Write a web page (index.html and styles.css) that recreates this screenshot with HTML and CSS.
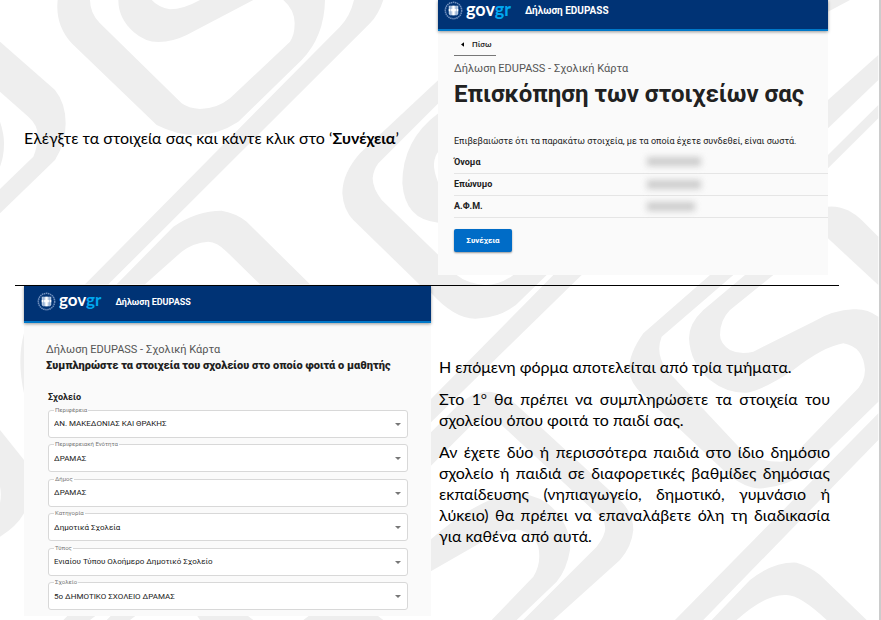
FILE: index.html
```html
<!DOCTYPE html>
<html lang="el">
    <head>
        <meta charset="UTF-8">
        <meta name="viewport" content="width=device-width, initial-scale=1.0">
        <title>Δήλωση EDUPASS - Οδηγίες</title>
        <link rel="stylesheet" href="styles.css">
    </head>

    <body>
        <!-- Watermark -->
        <svg class="watermark" viewBox="0 0 2643 1860" aria-hidden="true">
            <path d="M0,125 L165,270 Q197,310 197,370 Q197,430 165,480 L0,640 V567 L100,470 Q113,440 113,405 Q113,375 85,350 L0,275Z"/>
            <path d="M0,365 Q12,400 12,430 Q12,470 0,500Z"/>
            <path d="M173,0 Q165,75 215,130 L470,375 Q600,440 715,365 L905,180 Q973,110 975,0 H850 Q884,30 884,70 Q884,105 870,125 L690,295 Q650,327 600,327 Q565,325 545,310 L300,70 Q270,40 270,0Z"/>
            <path d="M355,0 Q355,55 400,95 Q435,126 475,126 Q520,125 560,105 L760,0 H600 Q550,28 510,28 Q475,22 455,0Z"/>
            <path d="M1062,0 Q1050,50 1020,80 L255,853 H325 L1110,70 Q1135,45 1150,0Z"/>
            <path d="M350,853 L520,680 Q590,632 665,632 Q710,640 740,665 L930,853 H780 L680,755 Q650,725 625,725 Q580,728 545,755 L435,853Z"/>
            <path d="M1315,240 L1080,460 Q1027,520 1027,580 Q1030,630 1060,660 L1260,855 H1315 V765 L1145,600 Q1118,565 1118,535 Q1120,510 1135,490 L1315,310Z"/>
            <path d="M1315,340 Q1207,420 1207,550 Q1215,660 1315,668 V550 Q1300,510 1302,490 Q1305,465 1315,455Z"/>
            <path d="M2130,825 L1930,1000 Q1887,1060 1887,1110 Q1890,1150 1930,1185 L2180,1420 Q2240,1470 2290,1465 Q2370,1455 2420,1415 L2635,1205 V950 Q2600,925 2560,928 Q2500,930 2440,965 L2260,1055 Q2220,1065 2190,1050 Q2160,1030 2160,1005 Q2160,960 2190,930 L2320,825 H2235 L2110,930 Q2067,970 2067,1015 Q2070,1090 2130,1140 Q2180,1180 2240,1178 Q2290,1170 2380,1110 Q2470,1040 2530,1030 Q2590,1040 2595,1110 Q2595,1150 2560,1180 L2410,1335 Q2370,1385 2340,1385 Q2280,1385 2230,1355 L2000,1110 Q1965,1060 1985,1010 L2200,825Z"/>
            <path d="M2635,1240 L2025,1860 H2110 L2635,1320Z"/>
            <path d="M2135,1860 L2250,1740 Q2320,1685 2390,1688 Q2430,1700 2460,1725 L2600,1860 H2480 Q2400,1785 2360,1785 Q2300,1780 2210,1860Z"/>
            <path d="M1290,1300 L1380,1210 Q1420,1175 1470,1175 Q1520,1185 1550,1215 L1860,1500 Q1900,1540 1900,1590 Q1895,1640 1860,1680 L1660,1860 H1570 L1790,1640 Q1820,1600 1815,1580 Q1815,1560 1790,1540 L1510,1280 Q1470,1240 1420,1270 L1290,1400Z"/>
            <path d="M1290,1620 Q1450,1480 1560,1480 Q1640,1490 1680,1550 Q1715,1600 1710,1650 Q1700,1710 1670,1745 L1550,1860 H1475 L1600,1730 Q1625,1690 1615,1640 Q1600,1600 1560,1590 Q1510,1585 1430,1635 L1290,1715Z"/>
            <path d="M1660,825 L1290,1200 V1270 L1745,825Z"/>
            <path d="M1290,875 Q1370,965 1440,955 Q1520,950 1570,893 L1640,825 H1540 Q1500,855 1455,855 Q1400,850 1370,825 H1290Z"/>
            <path d="M2484,35 L2550,0 H2484Z"/>
            <path d="M2484,300 L2635,165 V240 L2484,385Z"/>
            <path d="M2484,465 L2635,315 V355 L2484,505Z"/>
            <path d="M2484,620 Q2540,615 2590,665 L2635,710 V855 L2484,715Z"/>
            <path d="M72,1000 Q50,1080 72,1180Z"/>
            <path d="M0,1290 L72,1380 V1540 Q50,1580 0,1610 V1510 Q5,1480 0,1460Z"/>
            <path d="M205,1845 L190,1860 H270 L290,1845Z M335,1845 L320,1860 H390 L410,1845Z M590,1845 H740 L760,1860 H600Z M930,1845 H1130 L1150,1860 H910Z"/>
        </svg>

        <!-- Emblem used in both headers -->
        <svg class="symbols" aria-hidden="true">
            <symbol id="emblem" viewBox="0 0 20 20">
                <circle cx="10" cy="10" r="8.6" fill="none" stroke="#6f8fbd" stroke-width="1.6" stroke-dasharray="1.6 .6"/>
                <path d="M5 5h10v8q0 1.500-1.500 2h-7q-1.500-.5-1.500-2z" fill="#b9cce4"/>
                <path d="M10 5v10M5 9.500h10" stroke="#fff" stroke-width="2.400"/>
                <path d="M7 5v10M13 5v10" stroke="#7f9dc6" stroke-width=".6"/>
            </symbol>
        </svg>

        <main class="page">
            <section class="row row-review">
                <div class="note">
                    <p>Ελέγξτε τα στοιχεία σας και κάντε κλικ στο ‘<b>Συνέχεια</b>’</p>
                </div>
                <div class="card card-review">
                    <header class="header header-short">
                        <svg class="emblem"><use href="#emblem"/></svg>
                        <span class="brand">gov<span>gr</span></span>
                        <span class="service">Δήλωση EDUPASS</span>
                    </header>
                    <div class="review-body">
                        <a class="back" href="#"><svg class="back-icon" viewBox="0 0 4 6"><path d="M4 0v6L0 3z"/></svg>Πίσω</a>
                        <p class="caption">Δήλωση EDUPASS - Σχολική Κάρτα</p>
                        <h1>Επισκόπηση των στοιχείων σας</h1>
                        <p class="intro">Επιβεβαιώστε ότι τα παρακάτω στοιχεία, με τα οποία έχετε συνδεθεί, είναι σωστά.</p>
                        <table class="details">
                            <tr><th scope="row">Όνομα</th><td><span class="hidden-value"></span></td></tr>
                            <tr><th scope="row">Επώνυμο</th><td><span class="hidden-value"></span></td></tr>
                            <tr><th scope="row">Α.Φ.Μ.</th><td><span class="hidden-value short"></span></td></tr>
                        </table>
                        <button class="submit" type="button">Συνέχεια</button>
                    </div>
                </div>
            </section>

            <section class="row row-school">
                <div class="card card-school">
                    <header class="header">
                        <svg class="emblem"><use href="#emblem"/></svg>
                        <span class="brand">gov<span>gr</span></span>
                        <span class="service">Δήλωση EDUPASS</span>
                    </header>
                    <form class="school-form">
                        <p class="caption">Δήλωση EDUPASS - Σχολική Κάρτα</p>
                        <h2>Συμπληρώστε τα στοιχεία του σχολείου στο οποίο φοιτά ο μαθητής</h2>
                        <h3>Σχολείο</h3>
                        <div class="fields">
                            <div class="field">
                                <label for="region">Περιφέρεια</label>
                                <select id="region"><option>ΑΝ. ΜΑΚΕΔΟΝΙΑΣ ΚΑΙ ΘΡΑΚΗΣ</option></select>
                            </div>
                            <div class="field">
                                <label for="unit">Περιφερειακή Ενότητα</label>
                                <select id="unit"><option>ΔΡΑΜΑΣ</option></select>
                            </div>
                            <div class="field">
                                <label for="city">Δήμος</label>
                                <select id="city"><option>ΔΡΑΜΑΣ</option></select>
                            </div>
                            <div class="field">
                                <label for="category">Κατηγορία</label>
                                <select id="category"><option>Δημοτικά Σχολεία</option></select>
                            </div>
                            <div class="field">
                                <label for="type">Τύπος</label>
                                <select id="type"><option>Ενιαίου Τύπου Ολοήμερο Δημοτικό Σχολείο</option></select>
                            </div>
                            <div class="field">
                                <label for="school">Σχολείο</label>
                                <select id="school"><option>5ο ΔΗΜΟΤΙΚΟ ΣΧΟΛΕΙΟ ΔΡΑΜΑΣ</option></select>
                            </div>
                        </div>
                    </form>
                </div>
                <div class="note note-school">
                    <p>Η επόμενη φόρμα αποτελείται από τρία τμήματα.</p>
                    <p>Στο 1<sup>ο</sup> θα πρέπει να συμπληρώσετε τα στοιχεία του σχολείου όπου φοιτά το παιδί σας.</p>
                    <p>Αν έχετε δύο ή περισσότερα παιδιά στο ίδιο δημόσιο σχολείο ή παιδιά σε διαφορετικές βαθμίδες δημόσιας εκπαίδευσης (νηπιαγωγείο, δημοτικό, γυμνάσιο ή λύκειο) θα πρέπει να επαναλάβετε όλη τη διαδικασία για καθένα από αυτά.</p>
                </div>
            </section>
        </main>
    </body>
</html>
```
FILE: styles.css
```css
* {
    box-sizing: border-box;
    margin: 0;
    padding: 0;
}
body {
    position: relative;
    min-height: 100vh;
    background-color: #fff;
    border-right: 2px solid #ccc;
    font-family: Roboto, sans-serif;
    color: #212121;
    overflow: hidden;
}
.watermark {
    position: absolute;
    top: 0;
    left: 0;
    width: 881px;
    fill: #eee;
    z-index: -1;
}
.symbols {
    display: none;
}
.page {
    padding: 0 40px 0 15px;
}
.row {
    display: grid;
    padding-left: 9px;
}
.row-review {
    grid-template-columns: 414fr 401fr;
    padding-bottom: 10px;
    border-bottom: 1px solid #000;
}
.row-school {
    grid-template-columns: 407fr 408fr;
}
.note {
    align-self: center;
    font-family: Lato, "Noto Sans", sans-serif;
    font-size: 16px;
    line-height: 21px;
    color: #000;
}
.note-school {
    padding: 0 9px 0 8px;
    text-align: justify;
}
.note-school p + p {
    margin-top: 11px;
}
.note sup {
    font-size: 10px;
    line-height: 0;
}
.card {
    display: flex;
    flex-direction: column;
    background-color: #fafafa;
}
.card-review {
    margin-right: 11px;
}
.card-school {
    min-height: 330px;
}
.header {
    display: flex;
    align-items: center;
    height: 37px;
    padding: 0 13px 3px;
    background-color: #003375;
    border-bottom: 2px solid #0078c8;
    box-shadow: 0 1px 3px rgba(0, 0, 0, 0.4);
    color: #fff;
}
.header-short {
    height: 31px;
    padding: 0 6px 9px;
}
.emblem {
    width: 19px;
    height: 19px;
    margin-right: 3px;
}
.brand {
    padding-bottom: 3px;
    font-family: Lato, sans-serif;
    font-size: 17px;
    font-weight: bold;
    line-height: 18px;
}
.brand span {
    color: #00a8f0;
}
.service {
    margin-left: 14px;
    font-size: 9px;
    font-weight: bold;
}
.header-short .brand {
    font-size: 18px;
}
.header-short .service {
    font-size: 10px;
}
.review-body {
    padding: 5px 0 23px 16px;
}
.back {
    display: flex;
    align-items: center;
    width: fit-content;
    height: 20px;
    padding: 0 5px 2px 7px;
    border-bottom: 1px solid #777;
    font-size: 8px;
    font-weight: 500;
    color: #212121;
    text-decoration: none;
}
.back-icon {
    width: 3px;
    height: 5px;
    margin-right: 8px;
}
.caption {
    font-size: 11px;
    line-height: 16px;
    color: #555;
}
.review-body .caption {
    margin-top: 5px;
}
h1 {
    font-size: 24px;
    font-weight: bold;
    line-height: 34px;
    white-space: nowrap;
}
.intro {
    margin-top: 22px;
    font-size: 9px;
    line-height: 16px;
    white-space: nowrap;
}
.details {
    width: 100%;
    margin-top: 2px;
    border-collapse: collapse;
    table-layout: fixed;
}
.details tr {
    height: 22px;
}
.details th, .details td {
    border-bottom: 1px solid #e5e5e5;
    font-size: 9px;
    font-weight: bold;
    text-align: left;
}
.hidden-value {
    display: block;
    width: 54px;
    height: 9px;
    margin-left: 6px;
    background-color: #ccc;
    filter: blur(3px);
}
.hidden-value.short {
    width: 48px;
}
.submit {
    display: block;
    width: 58px;
    height: 23px;
    margin-top: 11px;
    background-color: #006cc7;
    border: none;
    border-radius: 2px;
    box-shadow: 0 1px 2px rgba(0, 0, 0, 0.4);
    color: #fff;
    font-family: Roboto, sans-serif;
    font-size: 8px;
    font-weight: bold;
    cursor: pointer;
}
.school-form {
    display: flex;
    flex: 1;
    flex-direction: column;
    padding: 19px 23px 5px 22px;
}
h2 {
    font-size: 11px;
    font-weight: 900;
    line-height: 16px;
    white-space: nowrap;
}
h3 {
    margin: 17px 0 7px 2px;
    font-size: 9px;
    font-weight: bold;
    line-height: 12px;
}
.fields {
    display: flex;
    flex: 1;
    flex-direction: column;
    justify-content: space-between;
    padding-left: 2px;
}
.field {
    position: relative;
}
.field label {
    position: absolute;
    top: -4px;
    left: 6px;
    padding: 0 1px;
    background: linear-gradient(#fafafa 50%, #fff 50%);
    font-size: 6px;
    line-height: 8px;
    color: #777;
}
.field::after {
    content: "";
    position: absolute;
    top: 13px;
    right: 7px;
    border: 3px solid transparent;
    border-top-color: #777;
    border-bottom: none;
    pointer-events: none;
}
.field select {
    display: block;
    width: 100%;
    height: 28px;
    padding: 0 5px;
    appearance: none;
    background-color: #fff;
    border: 1px solid #d8d8d8;
    border-radius: 3px;
    font-family: Roboto, sans-serif;
    font-size: 8px;
    color: #212121;
}
```
